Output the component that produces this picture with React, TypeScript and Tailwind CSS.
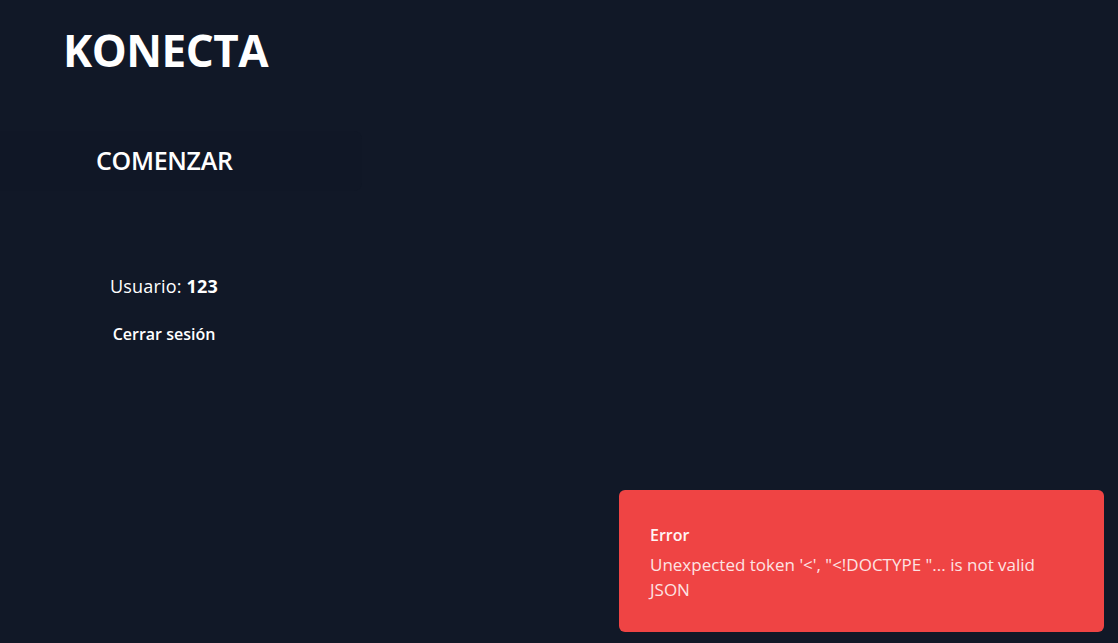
const App = () => {
        return <div className="min-h-screen bg-[#111827] text-white font-['Open_Sans',sans-serif]">
                <header className="px-[63px] pt-[23px]">
                        <h1 className="text-[44px] leading-[54px] font-bold tracking-[-0.5px]">KONECTA</h1>
                </header>

                <nav className="mt-[54px] w-[362px]">
                        <div className="h-[60px] flex items-center pl-[96px] bg-[#101726] rounded-r-lg">
                                <span className="text-[25px] font-semibold tracking-[-0.3px]">COMENZAR</span>
                        </div>
                </nav>

                <div className="w-[328px] mt-[82px] flex flex-col items-center">
                        <p className="text-[18px] leading-[27px] tracking-[0.2px]">Usuario: <span className="font-bold">123</span></p>
                        <button className="mt-[22px] text-[16px] font-semibold leading-[24px]">Cerrar sesión</button>
                </div>

                <div className="fixed right-[14px] bottom-[11px] w-[485px] rounded-md bg-[#ef4444] px-[31px] pt-[33px] pb-[30px]">
                        <p className="text-[16px] font-semibold leading-[24px] text-[#fff5f5]">Error</p>
                        <p className="mt-[5px] text-[17px] leading-[25px] text-[#fde3e3]">Unexpected token '&lt;', "&lt;!DOCTYPE "... is not valid JSON</p>
                </div>
        </div>
}

export default App;
